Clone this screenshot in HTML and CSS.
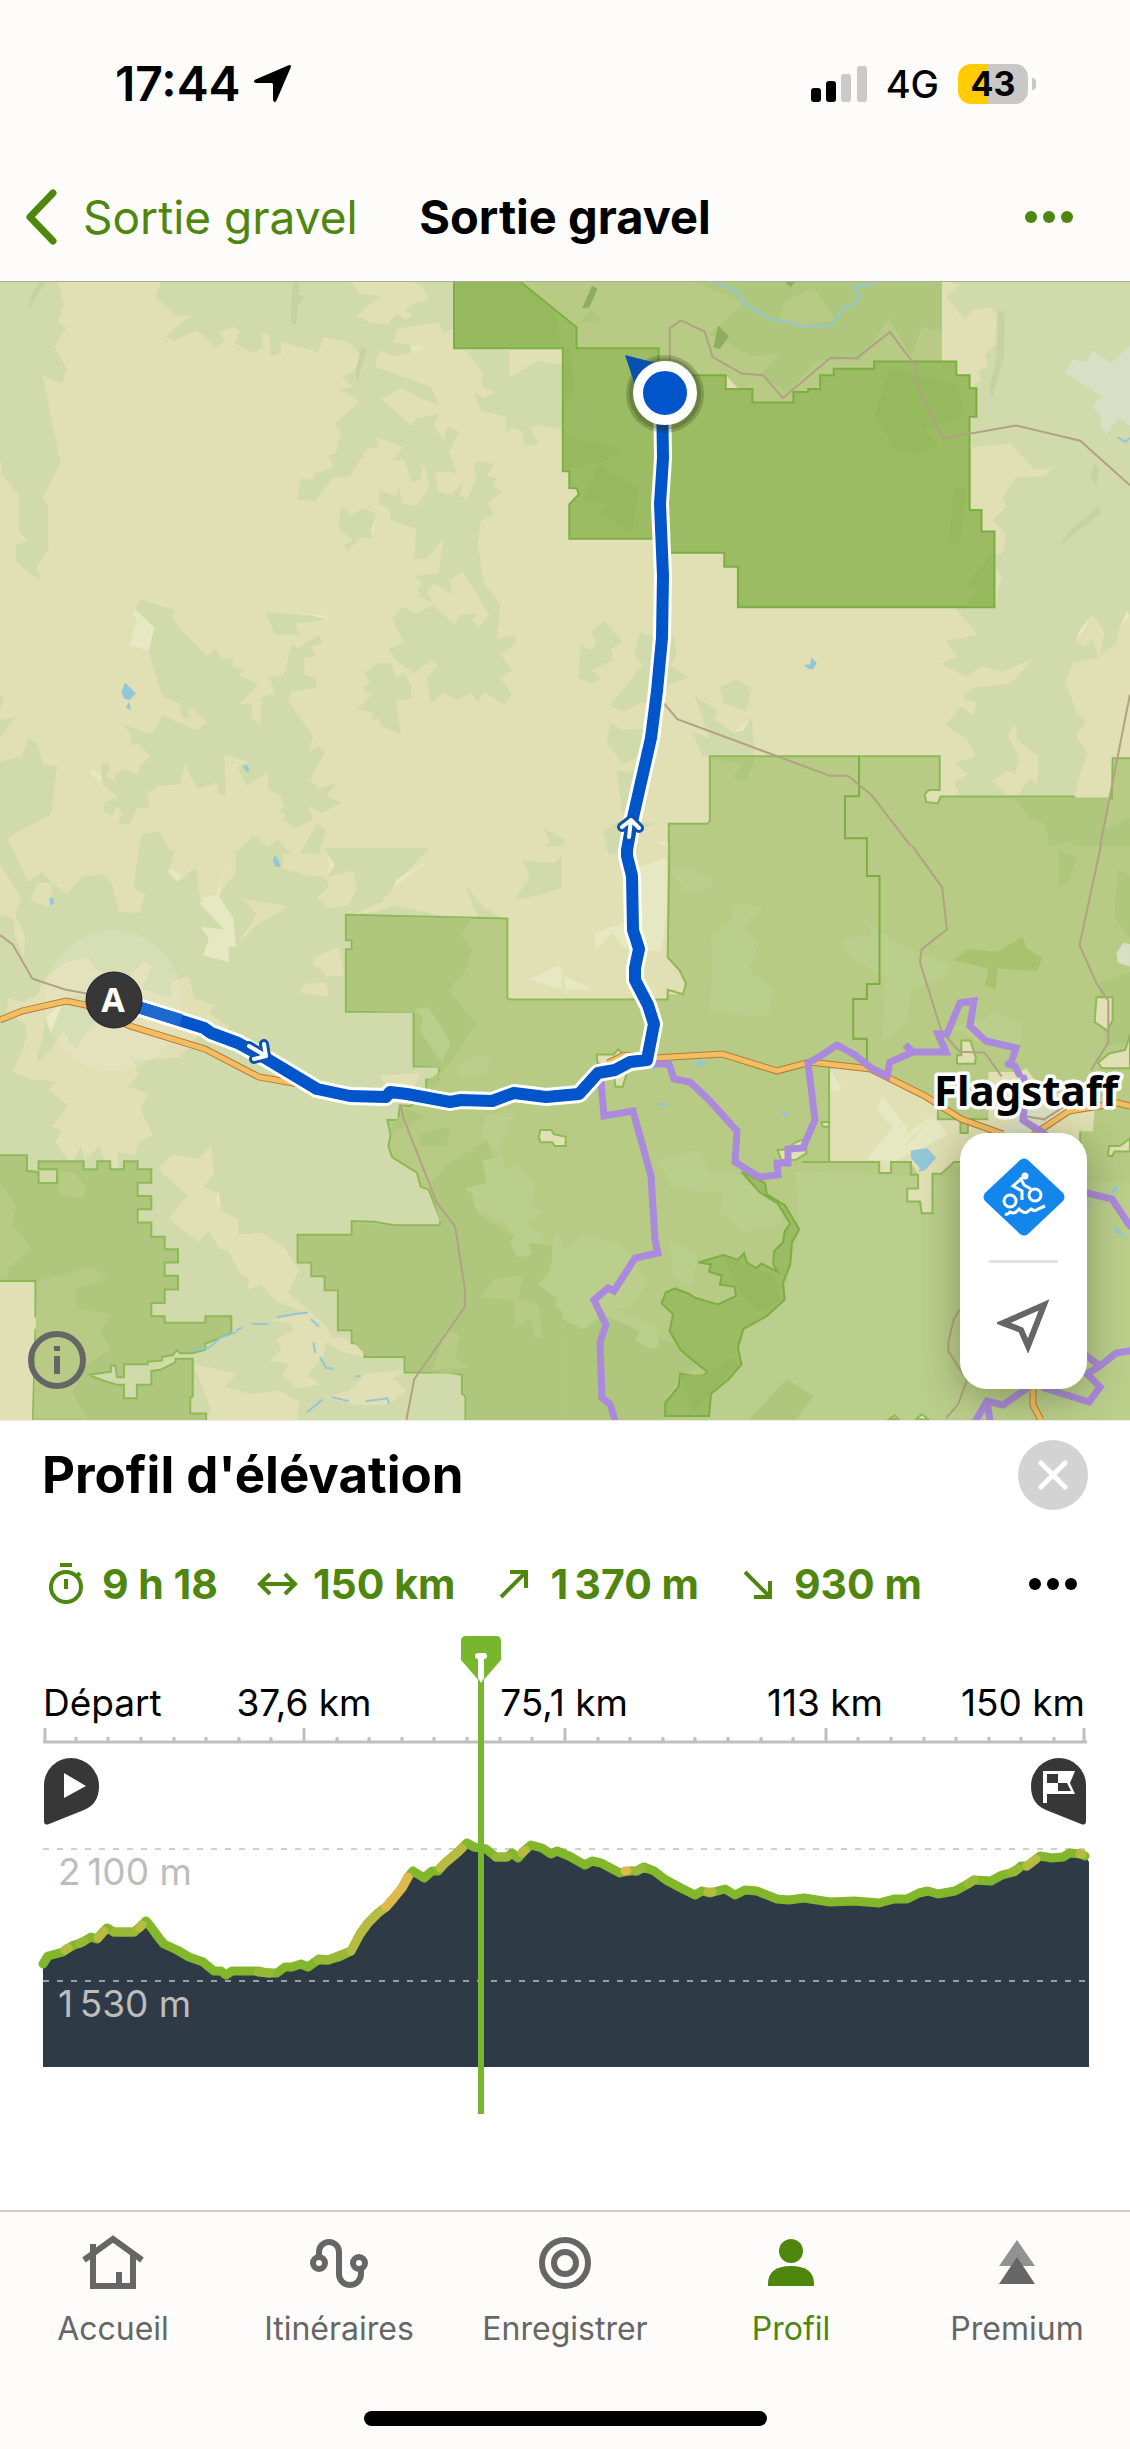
FILE: index.html
```html
<!DOCTYPE html>
<html lang="fr">
<head>
  <meta charset="UTF-8" />
  <meta name="viewport" content="width=device-width, initial-scale=1.0" />
  <title>Sortie gravel</title>
  <link rel="stylesheet" href="styles.css">
</head>
<body>
  <div class="app">
    <div class="status-bar">
      <div class="status-left">
        <span class="time">17:44</span>
        <svg width="40" height="40" viewBox="0 0 40 40"><path d="M36 1.500Q40 0 38.500 4L24.500 36.500Q22.500 40 21 36V20.500Q21 19 19.500 19H4Q0 17.500 3.500 15.500Z"/></svg>
      </div>
      <div class="status-right">
        <svg width="56" height="36" viewBox="0 0 56 36">
          <rect x="0" y="22" width="10" height="14" rx="3"/>
          <rect x="15" y="15" width="10" height="21" rx="3"/>
          <rect class="off" x="30" y="8" width="10" height="28" rx="3"/>
          <rect class="off" x="46" y="0" width="10" height="36" rx="3"/>
        </svg>
        <span class="network">4G</span>
        <span class="battery">43</span>
      </div>
    </div>

    <header class="nav-bar">
      <a href="#" class="back">
        <svg width="32" height="56" viewBox="0 0 32 56"><path d="M28 4L5 28L28 52"/></svg>
        Sortie gravel
      </a>
      <h1>Sortie gravel</h1>
      <button class="more" aria-label="Plus">
        <svg width="48" height="14" viewBox="0 0 48 14"><circle cx="6" cy="7" r="6"/><circle cx="24" cy="7" r="6"/><circle cx="42" cy="7" r="6"/></svg>
      </button>
    </header>

    <main>
      <div class="map">
        <svg class="map-canvas" viewBox="0 282 1130 1138">
          <rect class="sand" y="282" width="1130" height="1138"/>

          <!-- nord-ouest -->
          <g transform="translate(0 280) scale(.3603 .3635)">
            <path class="wood" d="M0 0H160L177 68L160 118L184 132L151 183L185 245L171 285L118 262L168 502L118 601L134 620V740L100 793L116 832L43 774L45 730L77 717L52 690V591L3 533L6 503L0 500Z"/>
            <path class="wood" d="M447 0H970L1000 38L1055 43L990 99L1030 118L1077 122L1100 94L1127 108L1145 96L1123 82L1148 64L1192 54L1170 16L1127 0H1260V132L1230 146L1217 115L1103 135L1090 172L1137 178L1140 200L1088 210L1055 192L1040 238L1198 295L1220 348L1113 298L1058 327L1142 401L1155 380L1217 370L1203 402L1232 440L1241 404L1272 417L1247 475L1267 530L1207 526L1215 580L1252 592L1288 552L1275 593L1296 603L1323 548L1314 505L1335 498L1370 508L1348 540L1376 544L1370 570L1397 582L1354 611L1370 645L1334 664L1326 730L1344 837L1389 891L1379 988L1432 975V1000L1389 1030L1421 1072L1389 1096L1421 1141L1399 1166L1344 1134L1324 1166L1309 1135L1268 1156L1230 1134L1196 1165L1184 1096L1217 1061L1197 1048L1148 1081L1097 1044L1079 1014L1120 997L1088 931L1117 899L1153 917L1203 895L1261 948L1275 921L1323 919L1310 937L1328 958L1357 921L1284 802L1249 826L1252 862L1205 835L1186 858L1200 887L1169 873L1158 850L1172 835L1148 815L1217 806L1231 712L1183 767H1150L1155 685L1084 660V633L1052 614V578L1101 594L1104 562L1118 616L1157 622L1192 571L1176 503L1166 551L1143 555L1121 494L1086 498L1119 460L1045 431L1054 465L1021 460L971 540L923 545L876 608L824 606L835 546L870 550L870 533L928 516L911 483L933 475L947 418L930 395L998 335L945 301L980 294L948 267L985 252L1000 205L966 170L898 158L882 199L779 169L781 200L751 211L747 149L725 148L730 186L700 199L651 175L666 143L650 127L607 142L625 167L600 186L546 138L483 167L457 156L530 98L492 99L432 48Z"/>
            <path class="wood" d="M1290 193H1414V270L1492 222L1568 235V415L1492 396L1470 408L1497 451L1457 457L1451 418L1424 406L1404 421V376L1335 360L1316 309L1343 326L1376 309L1338 293L1340 253ZM948 618L972 647L1012 627L1043 644L1034 711L1002 707L966 746L954 729L978 719L939 680ZM390 878L488 909L476 927L505 965L574 1034L597 1014L618 1045L648 1038L646 1067L677 1073L661 1087L717 1112L663 1168L700 1165L697 1203L723 1226L727 1148L762 1138L749 1094L788 1087L809 1004L831 1013L884 975L893 1000L863 1009L876 1035L844 1039V1083L877 1098V1121L807 1134L800 1159L869 1256L855 1299L884 1283L903 1297L861 1375L884 1398L937 1383L906 1418L946 1439L894 1466L858 1449L869 1484L820 1508L782 1482L796 1470L772 1461L787 1451L779 1418L745 1402V1352L684 1391L659 1340L695 1327L623 1305L627 1420L605 1415L607 1382L546 1400L514 1330L499 1388L434 1392L419 1409L407 1400L414 1449L381 1454L360 1496H326L340 1469L324 1445L313 1475L290 1463V1436L328 1424L282 1385V1324L308 1338L294 1366L326 1386L317 1361L348 1346L386 1363V1337L419 1311L383 1274L362 1282L366 1252L336 1220L419 1250L453 1197L542 1238L575 1217L534 1177L522 1190L535 1202L506 1207L499 1166L450 1144L414 1025L427 955L377 908ZM737 914L870 922L905 935L818 946L831 975H763Z"/>
            <path class="wood" d="M1048 1055L1085 1056L1099 1095L1123 1081L1142 1120V1152L1099 1156L1112 1248L1056 1227L1050 1202L1037 1218L1032 1187L990 1182L1032 1142L1008 1131L1027 1104L1009 1084ZM0 1145H10L0 1190ZM0 1211L45 1200L0 1258ZM78 1262L104 1274L118 1333L158 1337L142 1470L21 1534L40 1575H0V1325L61 1310ZM393 1526L444 1516L475 1580H383ZM655 1575L705 1528L745 1560L770 1540L810 1580ZM882 1495L906 1511L885 1580H830ZM1510 1508L1568 1540V1580H1490L1525 1545Z"/>
            <path class="pale" d="M367 915L377 908L428 955L412 1022L360 1003L379 938ZM773 910L908 925V934L860 922ZM248 1357L258 1348L282 1362V1384ZM1140 181L1182 184L1145 198ZM1043 648L1030 690L1034 706ZM414 879L450 890L477 902Z"/>
            <path class="hill" d="M813 3H832L828 38L844 48L827 65L822 124L806 115ZM1003 185L1018 195L1000 250L993 283L987 250ZM110 3L124 10L80 80L88 40Z"/>
            <path class="water" d="M347 1107L377 1137L359 1156L344 1151L337 1132ZM358 1160L364 1185L350 1176ZM672 1338L684 1333L692 1348L688 1356Z"/>
          </g>

          <!-- nord-est -->
          <g transform="translate(565 280) scale(.3603 .3635)">
            <path class="wood" d="M1046 0H1568V920L1540 950L1530 1000L1484 1033L1498 970L1465 920L1418 990L1440 1010L1465 988L1480 1040L1410 1052L1389 1105L1420 1190L1447 1218L1418 1254L1450 1300L1430 1360L1414 1420L1095 1418L1080 1380L1120 1360L1080 1328L1140 1310L1115 1262L1055 1224L1100 1175L1135 1198L1140 1160L1105 1152L1127 1123L1237 1110L1300 1041L1215 1078L1155 1062L1112 1092L1045 1054L1090 1036L1057 994L1147 976L1080 900H1192L1212 815L1195 790V757L1215 750L1224 700L1187 660L1225 625L1215 598L1250 543L1333 540L1350 517L1303 522L1237 449L1130 460L1125 300Z"/>
            <path class="sand" d="M1046 0L1097 14L1057 45L1111 111L1128 83L1183 74L1198 100L1194 180L1165 203L1175 240L1148 248L1155 275L1122 300L1085 222H1046ZM1242 1225L1253 1232L1255 1265L1315 1310L1310 1385L1290 1372L1255 1418H1225L1189 1376L1228 1350L1250 1358L1260 1310L1230 1258ZM1125 465L1158 580L1125 600Z"/>
            <path class="wood" d="M110 938L160 997L128 1014L134 1046L72 1073L98 1095L77 1111L37 1096L44 1006L76 1018L88 995L70 968ZM208 970L250 985L300 980L310 1028L292 1060L345 1094L290 1110L250 1180L215 1160L165 1186L124 1172L217 1058L192 1035ZM126 1218L160 1238L215 1235L222 1290L190 1320L160 1330L115 1272ZM144 1352L200 1350L190 1440L160 1470ZM430 1120L477 1099L518 1123L503 1186L440 1166ZM360 1143L423 1183L416 1208L467 1245L518 1200L527 1330L500 1376L467 1370L490 1330L380 1310L354 1242L400 1260ZM106 1520L145 1490L248 1494L200 1515L195 1568H120Z"/>
            <path class="town" d="M1388 255L1408 220L1448 224L1464 193L1515 230L1568 180V400L1535 380L1505 424L1486 405L1490 378L1465 346L1490 320Z"/>
            <path class="park" d="M-130 0H1046V222L760 260L630 340H520L446 262H260V188H32V130Z"/>
            <path class="park-dark" d="M340 0H1046V140L990 130L960 220H700L620 310L540 262L600 200L520 210L400 150L500 60ZM70 80L100 110L45 120Z"/>
            <path class="park" d="M610 60L690 20L750 110L640 130L590 105ZM900 105L965 220H820Z"/>
            <path class="hill-dark" d="M75 15L90 25L68 75L48 78ZM425 125L455 155L430 190L412 185ZM610 3H640L625 20Z"/>
            <path class="reserve" d="M-308 0H-130L32 130V188H260V262H446V300H520V337H634V308H675V300H708V262H746V244H858V224H1086V262H1123V298H1142V376H1123V633H1156V692H1192V900H480V789H442V750H292V712H12V617L38 590L33 573L12 572V526H-6V188H-308Z"/>
            <path class="reserve-shade" d="M-300 6H-130L-30 85L-10 180H-300ZM-4 190H15L25 300L-4 340ZM95 505L206 575L186 692L93 642L120 618L50 606ZM0 430L155 465L110 500L0 520ZM900 245L1090 290L1110 370L1000 410L1035 455L980 478L915 465L860 370ZM1080 572L1115 575L1095 725L1065 722ZM1188 750V896H1110L1150 850L1115 835Z"/>
            <path class="park edge" d="M402 1310H1040V1403H1010L998 1415L1003 1436L1035 1440L1042 1421H1410L1420 1428H1518L1520 1316H1590V1600H288V1496H395L402 1488Z"/>
            <path class="park-dark" d="M1245 1424H1515L1500 1510L1568 1480V1578H1440L1400 1545L1345 1560L1333 1500L1290 1480Z"/>
            <path class="park-dark" d="M404 1313H525V1330L500 1376L467 1370L490 1330L404 1318Z"/>
            <path class="border" d="M816 1310V1420H777V1536H838V1580"/>
            <path class="hill" d="M1203 85H1220L1218 210L1185 330L1178 300L1198 210ZM1480 625L1490 640L1410 700L1370 738L1400 690ZM1470 505L1482 520L1475 565L1458 545Z"/>
            <path class="pale" d="M518 1200L495 1240L468 1245ZM1560 910L1542 950L1568 925ZM1460 925L1430 960L1418 990L1440 965ZM258 1545H285L287 1568H270Z"/>
            <path class="water" d="M684 1039L698 1052L690 1070H675L663 1059L680 1058Z"/>
            <path class="stream" d="M408 3L480 34L505 70L575 111H612L655 129L738 124L778 72L800 67L819 45L803 20L820 14L850 15L862 3M1532 432L1556 445L1568 434"/>
            <path class="road" d="M291 220V132L322 111L388 142L410 212L490 257L550 262L605 325L737 214L810 215L902 143L975 240L968 270L1048 436L1252 400L1430 442L1568 565M272 1162L312 1208L735 1364H785L850 1416L968 1568M1568 1140L1483 1568"/>
          </g>

          <!-- sud-ouest -->
          <g transform="translate(0 850) scale(.3603 .37)">
            <path class="wood" d="M0 40L60 130L42 175L68 230L62 270L0 180V0H38L77 85L117 60L140 85L185 118L230 72L285 65L310 88L330 168L388 170L402 120L370 100L385 0H485L470 60L495 85L545 46L552 115L600 130L655 60V0H790L783 50L850 68L905 75L930 40L900 -5H1190L1095 95L1060 140L990 170L1568 170V1568H0Z"/>
            <path class="sand" d="M560 50H625L610 130L555 135ZM785 10H900L928 38L908 70L850 62L785 50ZM900 75L980 55L990 105L970 148L910 158L880 130L915 95ZM675 132L803 153L712 203L662 250L712 175ZM105 87L147 90L137 155L84 137ZM0 38L60 130L42 175L70 230L66 288L40 230L38 185L0 175Z"/>
            <path class="sand" d="M245 290L260 320L350 350L400 300L420 315L395 375L475 400L478 355L525 343L540 400L598 420L580 440L635 480L610 500L570 480L500 560L370 570L385 605L355 640L410 658L390 700L425 770L385 790L375 825L325 815L330 865L305 870L275 800L235 840L225 800L198 850L155 790L170 760L145 745L190 690L135 650L155 625L90 620L33 600L60 545L75 500L70 470L20 440L22 400L60 410L100 395L130 340L180 305Z"/>
            <path class="wood" d="M125 460L175 400L300 380L330 440L250 480L210 540L175 490L140 540L100 575L120 500Z"/>
            <path class="sand" d="M480 822L550 835L587 797L594 875L565 910L610 930L612 970L662 1000L662 1040L727 1035L790 1075L830 1135L800 1195L905 1285L920 1320L940 1315L1010 1340L1008 1370L945 1355L905 1330L895 1370L855 1420L890 1445L820 1455L785 1420L800 1390L750 1380L780 1350L765 1320L820 1300L805 1280L750 1270L850 1250L765 1220L725 1175L685 1190L692 1160L665 1143L635 1085L610 1078L578 1030L550 1060L468 995L520 935L438 860ZM537 1390L658 1415L625 1450L700 1470L775 1460L830 1490L825 1560H570L585 1510ZM1125 1405L1090 1430L1128 1460L1075 1500H985L905 1478L970 1460L1015 1415ZM870 290L940 262L955 340H905L912 398L830 385L850 360L905 358L900 330L870 310ZM1050 610L1167 603L1150 640L1080 640Z"/>
            <path class="pale" d="M625 50L608 125L648 185L655 262H635V303L563 285L580 240L557 208L622 215L555 145L565 130L600 120ZM475 10L470 50L505 70L490 85L468 60ZM910 15L928 40L908 72L915 40ZM127 455L180 400L140 495ZM605 915L612 970L600 945ZM1195 25L1095 100L1100 80ZM1460 68L1470 75L1425 138Z"/>
            <path class="sand" d="M1195 22L1290 28L1120 90L1063 148L990 170H1065L1120 190L1408 185V404H1580V-10H1210Z"/>
            <path class="wood" d="M1450 28L1540 35L1568 0V100L1500 120L1425 138L1470 75ZM1290 95L1340 150L1390 185H1330ZM1030 170L1095 150L1230 180H1110L1090 205Z"/>
            <path class="pale" d="M1468 350L1555 310L1568 345V378Z"/>
            <circle class="halo" cx="314" cy="407" r="190"/>

            <path class="park edge" d="M960 175L1408 185V400L1415 404H1590V1600H1292V1475L1282 1470V1418L1245 1412H1123V1370H1012V1333H976V1298H938V1190H901V1152H864V1115H826V1040H976V1003L1040 1005L1095 1014H1220L1223 1000L1190 918L1168 910L1157 872L1088 830L1078 800L1084 770L1075 730H1105L1110 690L1140 692L1183 645V620H1215L1220 590L1212 585H1148V440L1140 437H960V268H976V244H960Z"/>
            <path class="park-dark" d="M964 180L1310 184L1280 230L1310 270L1290 330L1245 380L1280 420L1320 470L1250 570L1200 640H1187V622L1220 600V588L1152 581V440L964 433V272H980V241H964ZM1192 905L1225 870L1240 851L1355 783L1374 855L1323 981L1429 1045L1466 1062L1540 1071L1526 1125L1545 1224L1574 1265V1575H1295V1475L1285 1466V1416L1126 1408V1367L1016 1366L980 1330V1295L942 1293V1187H905V1149L868 1148V1112H830V1044H980V1007L1095 1018H1226Z"/>
            <path class="park-dark" d="M1090 740L1130 700L1180 720L1085 765ZM1160 770L1250 745L1240 800L1170 800Z"/>
            <path class="park-light" d="M1150 430L1190 425L1250 520L1228 575L1165 490L1175 455ZM1350 715L1430 710L1400 770L1380 800L1410 870L1430 845L1485 905L1480 960L1515 980L1460 1005L1500 1035L1515 1065L1466 1062L1478 1095L1435 1100L1415 1060L1429 1045L1400 1010L1320 970L1310 930L1290 915L1350 900L1340 840L1390 825L1335 770ZM1535 1050L1545 1030L1568 1060V1255L1540 1230L1550 1215L1494 1175L1530 1135ZM1265 590L1330 550L1360 560L1350 600L1280 620Z"/>
            <path class="park" d="M1370 1160L1450 1150L1440 1210L1495 1230L1505 1320H1485L1475 1265L1430 1290L1425 1215L1335 1210ZM1240 1295L1275 1310L1265 1370L1300 1400L1200 1405Z"/>

            <path class="park-dark edge" d="M-20 825H75V867L107 870V900H158V863H107V841H232V863H270V841H306V863H344V841H382V863H420V899H382V935H420V971H382V1007H420V1045H457V1079H494V1115H457V1151H494V1188H457V1224H420V1260H457V1278H570V1260H642V1305L570 1335V1350L535 1360H500L490 1352L480 1365L450 1370V1380L410 1383V1390H344V1425H325L320 1393H308V1410L250 1418L262 1425L290 1435L325 1445H344V1482H380V1445H420V1408L445 1405L487 1385V1375H535V1478L528 1480V1523H572V1600H88L98 1295L110 1290V1262H98V1165H-20Z"/>
            <path class="sand" d="M-10 1168H95V1262L107 1268V1288L95 1295L88 1560H-10Z"/>
            <path class="park" d="M0 905L20 925L45 965L35 1010L90 1080L25 1125L20 1160H0ZM102 1165L250 1128L300 1155L205 1190L220 1240L310 1255L280 1300L310 1350L240 1390L200 1465L240 1535H94ZM165 870L205 870L240 915L230 942L162 930Z"/>
            <path class="stream" d="M535 1352L580 1345L610 1320L655 1303M672 1290L655 1300M698 1280L745 1282M770 1263L815 1255L855 1250M863 1268L885 1288M870 1330L875 1360M888 1370L905 1400L925 1402M985 1422H1000M852 1520L895 1485M920 1478L968 1490M1015 1490L1075 1482L1080 1497"/>
            <path class="water" d="M762 15L773 25L778 45L765 45L757 30ZM136 130L148 130L150 145L140 150Z"/>
            <path class="road" d="M0 230L35 255L90 348L180 377L240 388M1112 690L1120 725L1212 953L1263 1017L1291 1190L1290 1235L1150 1430L1128 1540"/>
          </g>

          <!-- sud-est -->
          <g transform="translate(565 850) scale(.3603 .37)">
            <path class="park" d="M-6 -10H1580V1560H-6Z"/>
            <path class="park-light" d="M640 870L950 880L1568 900V1540H400L410 1460L480 1400L490 1290L610 1200L650 1030ZM-6 1080L50 1042L140 1060L190 1100L230 1170L180 1235L100 1250L51 1296L-6 1270ZM405 230L465 190L460 140L550 155L490 210L540 250L510 320L575 380L565 450L400 440L410 320ZM255 840L370 810L400 870L500 880L600 950V1010L500 1035L430 980L440 930L300 915ZM290 55L340 50L420 80L380 120L330 110ZM770 240L860 230L830 190L960 270L1070 310L1050 350L960 380L950 460L880 520L890 350L790 290ZM1080 480L1200 440L1270 470L1260 540L1150 520Z"/>
            <path class="park-dark" d="M-6 1268L51 1296L115 1251L208 1305L300 1330L370 1400L320 1420L280 1490V1540H-6ZM1480 360L1568 330V520L1500 530ZM1370 0L1420 20L1400 80L1370 105ZM1535 50L1568 70V240L1525 180ZM615 1430L690 1475L640 1540H510Z"/>
            <path class="park-light" d="M120 1230L255 1290L260 1340L240 1350L195 1325L210 1295L110 1260ZM290 1055L370 1090L350 1180L300 1150Z"/>
            <path class="park-shade" d="M1080 298L1120 268L1200 275L1270 235L1280 265L1325 292L1310 328L1200 320L1195 378L1165 365L1175 320Z"/>
            <path class="sand" d="M-10 -14H285V290L310 320L335 355L330 390H285V404H-10Z"/>
            <path class="wood" d="M108 -14H205L195 10L125 12Z"/>
            <path class="pale" d="M190 50L283 20V160L268 275L165 265L130 225L83 270V225L165 195ZM0 342L78 378H0Z"/>
            <path class="border thin" d="M290 -10L285 290L318 325L336 360L328 390L285 378V404L-8 404"/>
            <path class="border" d="M838 -10V70H873V362H838V403H800V510H838V580"/>
            <path class="reserve edge" d="M490 870L540 925L590 955L625 1010L610 1030L605 1060L580 1085L578 1120L590 1140L545 1118L530 1130L505 1115L497 1090L480 1108L440 1095L370 1115L405 1120L400 1140L435 1150L430 1175L470 1180L475 1205L425 1228L360 1210L345 1200L305 1185L280 1195L268 1225L300 1255L290 1300L320 1350L355 1380L395 1410L380 1425L320 1415L315 1450L278 1495V1530H400L405 1470L455 1430L490 1390L480 1345L495 1295L560 1260L610 1215L605 1170L625 1120L630 1060L650 1025L610 960L560 930L555 900Z"/>
            <path class="reserve-shade" d="M440 1100L500 1120L580 1150L600 1215L540 1250L480 1190ZM320 1420L400 1415L470 1370L480 1395L400 1470L360 1520L340 1470Z"/>
            <path class="sand" d="M735 590H800L895 610L940 630L1000 665L1035 700V728H1095V765H1120V728H1175V600H1260L1280 590L1310 630L1470 700L1465 760L1430 760V800L1100 850L1080 840L1050 875H1020V982H990V950H950V915H980V878L960 843H905V872H872V843H735Z"/>
            <path class="pale" d="M865 700L880 665L950 750L945 800L1025 720L1060 770L920 840L835 838L910 750ZM735 590L770 650H735ZM950 765L1025 715L940 800Z"/>
            <path class="border thin" d="M658 843H872V873H905V843H960V878H980V915H950V950H985L990 982H1020V875H1045L1080 843H1100M733 590V843M1035 700V728H1098V765H1118V728H1175M1430 760V800"/>
            <path class="sand edge" d="M88 553H135L148 538L160 552L185 560L160 640H140L135 600L90 575ZM590 810H615L640 790L668 780L670 820L640 838H600ZM1100 515L1125 515L1140 560L1138 578H1088V555H1100ZM1475 398H1520V460L1505 488L1470 465ZM1568 498L1555 540L1510 550L1480 575L1490 590H1568ZM1510 800H1540L1568 780V815H1525L1518 828L1507 825ZM712 735L733 735V748H715ZM900 1538L915 1528L925 1538ZM975 1538L990 1525L1010 1540ZM-68 757H-38L-31 768L2 775V800H-28L-36 790L-68 790L-73 775Z"/>
            <path class="town" d="M1210 750L1280 705L1330 698L1410 700L1330 765L1215 765ZM1530 280L1550 250L1568 255V315L1535 305Z"/>
            <path class="water" d="M960 812L1005 806L1030 832L1000 865L980 870L985 860L960 832ZM358 582L372 567L393 573L388 583ZM255 685L282 683L280 692L258 691ZM600 708L612 706L618 725L605 720ZM240 583H255L250 598L242 592ZM1515 920L1530 907L1535 915L1518 932ZM1522 1015L1545 1035L1568 1052L1530 1035ZM1448 950L1472 965L1455 962Z"/>
            <path class="road" d="M965 -10L1047 102L1060 215L990 268L985 303L1045 490L1095 545L1165 548L1212 612M1487 -10L1428 257L1475 360L1508 407V520L1460 595M1096 1243L1080 1265L1064 1330V1355L1116 1433L1090 1500L1058 1535M1280 720L1330 728L1390 690"/>
          </g>

          <defs>
            <path id="i40" d="M0 1020L22 1011L66 1001L86 1005L130 1026L205 1049L259 1077L299 1084M608 1063L624 1055L655 1058L722 1054L777 1071L810 1062L871 1069L925 1096L961 1119L1003 1134M1033 1135L1069 1111L1118 1103L1130 1106M1033 1388V1405L1041 1420"/>
            <path id="trace" d="M114 1000L141 1008L204 1028L211 1033L238 1043L267 1059L317 1089L350 1096L386 1097L390 1092L407 1094L450 1102L461 1100L492 1101L514 1093L546 1097L579 1094L598 1073L615 1070L630 1062L647 1060L654 1024L648 1005L635 980V968L639 949L633 930L632 876L627 856V850L632 822L651 738L657 691L662 638L663 576L660 504L663 458L662 393"/>
            <path id="fleches" d="M249 1046L266 1056M264 1044L266 1056L254 1059M629 837L631 820M622 827L631 820L639 828"/>
          </defs>

          <use class="highway" href="#i40"/>
          <use class="highway-fill" href="#i40"/>

          <g class="cycleway">
            <path d="M601 1081L604 1116L633 1111L651 1176L655 1240L658 1253L635 1258L614 1291L608 1288L594 1300L606 1325L600 1342L602 1398L610 1404L615 1420"/>
            <path d="M655 1064H669L674 1079L690 1082L709 1100L737 1131L735 1162L759 1177L778 1175L777 1163H788V1149L803 1148L815 1120L808 1063L819 1057L837 1045L855 1055L871 1068L887 1076L890 1062L913 1052L905 1045L913 1052H946L938 1034H947L960 1003L974 1001L970 1026L986 1041L1016 1048L1012 1060M1008 1064L1015 1066L1019 1074M1024 1078V1080M1024 1110L1023 1120L1032 1126L1044 1133"/>
            <path d="M1087 1193L1112 1199L1130 1226M1087 1356L1100 1366L1116 1353L1130 1351M1100 1366L1087 1374L1100 1387L1089 1402L1044 1388M1026 1389L1003 1405L987 1401L976 1420M987 1401L990 1420"/>
          </g>

          <use class="route-case" href="#trace"/>
          <use class="route-line" href="#trace"/>
          <path class="route-near" d="M141 1008L181 1020"/>
          <use class="arrow-case" href="#fleches"/>
          <use class="arrow" href="#fleches"/>

          <circle class="start-pin" cx="114" cy="1000" r="28"/>
          <text class="start-letter" x="113" y="1012" text-anchor="middle">A</text>

          <circle class="here-shadow" cx="665" cy="394" r="39"/>
          <circle class="here-shadow" cx="665" cy="394" r="36"/>
          <path class="heading" d="M625 355L656 363L635 385Z"/>
          <circle class="here-ring" cx="665" cy="393" r="27"/>

          <text class="city" x="1026" y="1106" text-anchor="middle">Flagstaff</text>
        </svg>

        <button class="info" aria-label="Informations">
          <svg width="58" height="58" viewBox="0 0 58 58"><circle cx="29" cy="29" r="26"/><path d="M26 15H32V20H26ZM26 25H32V43H26Z"/></svg>
        </button>

        <div class="map-controls">
          <button aria-label="Type de carte">
            <svg width="82" height="78" viewBox="0 0 82 78">
              <path class="diamond" d="M37 2Q41 -1 45 2L80 35Q83 39 80 43L45 76Q41 79 37 76L2 43Q-1 39 2 35Z"/>
              <circle class="bike" cx="27" cy="43" r="6"/>
              <circle class="bike" cx="52" cy="37" r="6"/>
              <circle class="head" cx="42" cy="18" r="3.500"/>
              <path class="bike" d="M48 31L41 27L38 21L30 28L39 33V42M36 21H40M22 56Q25 57 27 54Q30 56 33 54L36 51Q41 56 44 54L48 51Q52 54 55 51L62 48"/>
            </svg>
          </button>
          <hr>
          <button aria-label="Ma position">
            <svg width="54" height="54" viewBox="0 0 54 54"><path class="locate" d="M47 6L6 24L24 31L31 47Z"/></svg>
          </button>
        </div>
      </div>

      <section class="panel">
        <div class="panel-header">
          <h2>Profil d'élévation</h2>
          <button class="close" aria-label="Fermer">
            <svg width="30" height="30" viewBox="0 0 30 30"><path d="M3 3L27 27M27 3L3 27"/></svg>
          </button>
        </div>

        <div class="stats">
          <div class="stat">
            <svg width="43" height="44" viewBox="0 0 43 44"><circle cx="21" cy="25" r="15"/><path d="M15 3H27M21 17V27M31 15L35 11"/></svg>
            9 h 18
          </div>
          <div class="stat">
            <svg width="43" height="44" viewBox="0 0 43 44"><path d="M4 22H39M14 12L4 22L14 32M29 12L39 22L29 32"/></svg>
            150 km
          </div>
          <div class="stat">
            <svg width="43" height="44" viewBox="0 0 43 44"><path d="M8 35L33 10M17 10H33V26"/></svg>
            1&#8239;370 m
          </div>
          <div class="stat">
            <svg width="43" height="44" viewBox="0 0 43 44"><path d="M8 10L33 35M17 35H33V19"/></svg>
            930 m
          </div>
          <button class="more" aria-label="Plus de statistiques">
            <svg width="48" height="14" viewBox="0 0 48 14"><circle cx="6" cy="7" r="6"/><circle cx="24" cy="7" r="6"/><circle cx="42" cy="7" r="6"/></svg>
          </button>
        </div>

        <svg class="chart" viewBox="42 1630 1046 490">
          <g class="axis-labels">
            <text x="43" y="1716">Départ</text>
            <text x="304" y="1716" text-anchor="middle">37,6 km</text>
            <text x="564" y="1716" text-anchor="middle">75,1 km</text>
            <text x="825" y="1716" text-anchor="middle">113 km</text>
            <text x="1085" y="1716" text-anchor="end">150 km</text>
          </g>
          <path class="axis" d="M43 1742H1087M45 1728V1742M304 1728V1742M565 1728V1742M826 1728V1742M1084 1728V1742"/>
          <path class="axis" d="M76 1737V1742M108 1737V1742M141 1737V1742M174 1737V1742M206 1737V1742M239 1737V1742M271 1737V1742M337 1737V1742M369 1737V1742M402 1737V1742M434 1737V1742M467 1737V1742M500 1737V1742M532 1737V1742M598 1737V1742M630 1737V1742M663 1737V1742M695 1737V1742M728 1737V1742M761 1737V1742M793 1737V1742M858 1737V1742M891 1737V1742M924 1737V1742M956 1737V1742M989 1737V1742M1021 1737V1742M1054 1737V1742"/>

          <!-- départ / arrivée -->
          <path class="pin" d="M44 1785A27 27 0 0 1 71 1758A28 28 0 0 1 99 1786Q99 1804 84 1810L49 1824Q44 1826 44 1821Z"/>
          <path class="pin-icon" d="M64 1773L86 1786L64 1798Z"/>
          <path class="pin" d="M1086 1785A27 27 0 0 0 1059 1758A28 28 0 0 0 1031 1786Q1031 1804 1046 1810L1081 1824Q1086 1826 1086 1821Z"/>
          <path class="pin-icon" d="M1043 1771H1075L1070 1783L1075 1794H1047V1803H1043Z"/>
          <path class="pin" d="M1047 1774H1058V1783H1047ZM1058 1783H1067L1071 1791H1058Z"/>

          <path class="guide" d="M43 1849H1086"/>
          <path class="relief" d="M43 2067V1964L48 1956L63 1952L67 1949L74 1945L81 1943L91 1937L97 1939L102 1933L107 1928L114 1932H134L141 1926L146 1921L151 1927L159 1938L164 1944L177 1950L189 1957L203 1962L214 1971H221L226 1975L232 1971H258L267 1973H277L285 1967H292L301 1964L308 1967L319 1959L328 1960L339 1957L351 1951L360 1934L368 1923L378 1913L386 1907L393 1899L402 1888L408 1877L413 1871L424 1878L432 1871H438L445 1863L458 1852L467 1843L474 1847L486 1849L496 1857H507L512 1853L518 1858L524 1851L531 1845L542 1848L551 1854L557 1851L569 1856L585 1865L592 1861L601 1863L620 1873L628 1871H637L644 1867L654 1871L666 1880L681 1888L695 1895L702 1891L710 1893L725 1889L735 1895L745 1890L757 1891L777 1899L789 1900L804 1898L830 1902L854 1901L879 1903L894 1899H907L919 1893L928 1891L938 1894L955 1891L966 1885L974 1880L991 1881L1002 1875L1014 1872L1021 1866H1027L1040 1856L1052 1858L1063 1857L1070 1853L1085 1855L1089 1862V2067Z"/>
          <path class="guide on-relief" d="M43 1981H1086"/>
          <path class="slope" d="M43 1964L48 1956L63 1952L67 1949L74 1945L81 1943L91 1937L97 1939L102 1933L107 1928L114 1932H134L141 1926L146 1921L151 1927L159 1938L164 1944L177 1950L189 1957L203 1962L214 1971H221L226 1975L232 1971H258L267 1973H277L285 1967H292L301 1964L308 1967L319 1959L328 1960L339 1957L351 1951L360 1934L368 1923L378 1913L386 1907L393 1899L402 1888L408 1877L413 1871L424 1878L432 1871H438L445 1863L458 1852L467 1843L474 1847L486 1849L496 1857H507L512 1853L518 1858L524 1851L531 1845L542 1848L551 1854L557 1851L569 1856L585 1865L592 1861L601 1863L620 1873L628 1871H637L644 1867L654 1871L666 1880L681 1888L695 1895L702 1891L710 1893L725 1889L735 1895L745 1890L757 1891L777 1899L789 1900L804 1898L830 1902L854 1901L879 1903L894 1899H907L919 1893L928 1891L938 1894L955 1891L966 1885L974 1880L991 1881L1002 1875L1014 1872L1021 1866H1027L1040 1856L1052 1858L1063 1857L1070 1853L1081 1854L1085 1856"/>
          <path class="slope mild" d="M80 1943L84 1941M114 1932H134M258 1972L270 1973M318 1960L328 1960L351 1951M496 1857H507M636 1871L642 1868M968 1884L974 1880M1012 1872L1018 1869"/>
          <path class="slope medium" d="M65 1950L68 1948M98 1938L104 1931M139 1928L142 1925M351 1951L360 1934L368 1923L378 1913L386 1907M440 1868L445 1863L458 1852L462 1848M522 1853L525 1850M708 1892L712 1892M1027 1866L1036 1859M1080 1854H1082"/>
          <path class="slope steep" d="M386 1907L393 1899L402 1888L408 1877M625 1871H627"/>
          <text class="altitude" x="58" y="1885">2&#8239;100 m</text>
          <text class="altitude" x="58" y="2017">1&#8239;530 m</text>

          <path class="cursor" d="M478 1678H484V2114H478ZM466 1636H496Q501 1636 501 1641V1660L481 1683L461 1660V1641Q461 1636 466 1636Z"/>
          <path class="cursor-mark" d="M478 1653H484Q487 1653 487 1656T484 1659V1678L481 1683L478 1678V1659Q475 1659 475 1656T478 1653Z"/>
        </svg>
      </section>
    </main>

    <nav class="tab-bar">
      <div class="tabs">
        <a href="#" class="tab">
          <svg width="64" height="58" viewBox="0 0 64 58"><path d="M3 26L32 5L61 26M12 22V10M12 20V52H52V20M38 52V38"/></svg>
          Accueil
        </a>
        <a href="#" class="tab">
          <svg width="64" height="58" viewBox="0 0 64 58"><circle cx="12" cy="29" r="6"/><circle cx="52" cy="29" r="6"/><path d="M12 23V18A10 10 0 0 1 32 18V40A10 10 0 0 0 54 40V35"/></svg>
          Itinéraires
        </a>
        <a href="#" class="tab">
          <svg width="64" height="58" viewBox="0 0 64 58"><circle cx="32" cy="29" r="23"/><circle cx="32" cy="29" r="11"/></svg>
          Enregistrer
        </a>
        <a href="#" class="tab active">
          <svg width="64" height="58" viewBox="0 0 64 58"><circle class="solid" cx="32" cy="17" r="12"/><path class="solid" d="M9 52V50Q9 32 32 32T55 50V52Z"/></svg>
          Profil
        </a>
        <a href="#" class="tab">
          <svg width="64" height="58" viewBox="0 0 64 58"><path class="solid faded" d="M32 6L50 32H14Z"/><path class="solid" d="M32 23L50 50H14Z"/></svg>
          Premium
        </a>
      </div>
      <div class="home-indicator"></div>
    </nav>
  </div>
</body>
</html>
```

FILE: styles.css
```css
* {
  box-sizing: border-box;
}

body {
  margin: 0;
  font-family: Inter, 'Liberation Sans', sans-serif;
  background: #fdfcfa;
  color: #000;
}

h1,
h2 {
  margin: 0;
  font-weight: 700;
}

button {
  margin: 0;
  padding: 0;
  border: none;
  background: none;
  cursor: pointer;
}

a {
  text-decoration: none;
}

svg {
  display: block;
  flex: none;
}

.app {
  min-height: 100vh;
  display: flex;
  flex-direction: column;
}

/* Barre d'état */
.status-bar {
  display: flex;
  justify-content: space-between;
  align-items: center;
  padding: 54px 102px 38px 115px;
  line-height: 60px;
}

.status-left {
  display: flex;
  align-items: center;
  gap: 11px;
}

.time {
  font-size: 48px;
  font-weight: 600;
}

.status-right {
  display: flex;
  align-items: center;
  gap: 19px;
}

.status-right .off {
  fill: #cbcac8;
}

.network {
  font-size: 38px;
  font-weight: 500;
}

.battery {
  position: relative;
  width: 70px;
  height: 40px;
  line-height: 40px;
  border-radius: 13px;
  background: linear-gradient(to right, #ffcc02 43%, #c9c8c6 43%);
  font-size: 34px;
  font-weight: 700;
  text-align: center;
}

.battery::after {
  content: "";
  position: absolute;
  right: -8px;
  top: 14px;
  width: 4px;
  height: 12px;
  border-radius: 0 4px 4px 0;
  background: #c9c8c6;
}

/* Navigation */
.nav-bar {
  display: grid;
  grid-template-columns: 1fr auto 1fr;
  align-items: center;
  padding: 35px 57px 34px 25px;
  border-bottom: 1px solid #a9ad98;
  line-height: 60px;
}

.back {
  display: flex;
  align-items: center;
  gap: 26px;
  margin-right: -32px;
  font-size: 46px;
  color: #4f860d;
}

.back svg {
  fill: none;
  stroke: #4f860d;
  stroke-width: 7;
  stroke-linecap: round;
  stroke-linejoin: round;
}

.nav-bar h1 {
  margin-left: 32px;
  font-size: 47px;
}

.nav-bar .more {
  justify-self: end;
  fill: #4f860d;
}

/* Carte */
.map {
  position: relative;
  overflow: hidden;
}

.map-canvas {
  width: 100%;
  height: auto;
}

.sand { fill: #e1dfb4; }
.wood { fill: #d1daab; }
.pale { fill: #e6e8c1; }
.town { fill: #d9dfc4; }
.park { fill: #b7cb84; }
.park-light { fill: #bbcf8c; }
.park-dark { fill: #aec77c; }
.park-shade { fill: #a8c270; }
.reserve { fill: #9cbc63; }
.reserve-shade { fill: #96b95d; }
.hill { fill: #c8d2a0; }
.hill-dark { fill: #8fac63; }
.water { fill: #94c6da; }

.halo {
  fill: #fff;
  opacity: 0.12;
}

.edge {
  stroke: #8fb957;
  stroke-width: 2;
  vector-effect: non-scaling-stroke;
}

.reserve {
  stroke: #7dae42;
  stroke-width: 2;
  vector-effect: non-scaling-stroke;
}

.border {
  fill: none;
  stroke: #7dae42;
  stroke-width: 2;
  vector-effect: non-scaling-stroke;
}

.border.thin {
  stroke: #8fb957;
}

.road,
.stream {
  fill: none;
  stroke: #b2a184;
  stroke-width: 2;
  vector-effect: non-scaling-stroke;
}

.stream {
  stroke: #94c6da;
}

.highway,
.highway-fill {
  fill: none;
  stroke: #b57a3c;
  stroke-width: 7;
}

.highway-fill {
  stroke: #f3be62;
  stroke-width: 5;
}

.cycleway path {
  fill: none;
  stroke: #ab89dc;
  stroke-width: 7;
  stroke-linecap: round;
}

.route-case,
.route-line,
.route-near {
  fill: none;
  stroke: #0055cb;
  stroke-width: 12;
  stroke-linejoin: round;
}

.route-case {
  stroke: #fff;
  stroke-width: 18;
}

.route-near {
  stroke: #1e69d0;
}

.arrow-case,
.arrow {
  fill: none;
  stroke: #0b52b4;
  stroke-width: 10;
  stroke-linecap: round;
  stroke-linejoin: round;
}

.arrow {
  stroke: #fff;
  stroke-width: 4;
}

.start-pin {
  fill: #373737;
  stroke: #261c2b;
  stroke-width: 1;
}

.start-letter {
  fill: #fff;
  font-family: 'Noto Sans', sans-serif;
  font-size: 34px;
  font-weight: 700;
}

.heading {
  fill: #0b4fb0;
}

.here-shadow {
  fill: #26330d;
  opacity: 0.24;
}

.here-ring {
  fill: #0055cb;
  stroke: #fff;
  stroke-width: 10;
}

.city {
  font-family: 'Noto Sans', sans-serif;
  font-size: 42px;
  font-weight: 700;
  stroke: #fff;
  stroke-width: 7;
  stroke-linejoin: round;
  paint-order: stroke;
}

.info {
  position: absolute;
  left: 28px;
  bottom: 31px;
  fill: #666;
}

.info circle {
  fill: none;
  stroke: #666;
  stroke-width: 6;
}

.map-controls {
  position: absolute;
  right: 43px;
  bottom: 31px;
  width: 127px;
  padding: 25px 0 36px;
  border-radius: 27px;
  background: #fff;
  box-shadow: 0 8px 40px rgba(50, 60, 20, 0.4);
  display: flex;
  flex-direction: column;
  align-items: center;
}

.map-controls hr {
  width: 69px;
  margin: 24px 0 36px;
  border: none;
  border-top: 3px solid #e3e3e3;
}

.diamond {
  fill: #1286ea;
}

.bike {
  fill: none;
  stroke: #fff;
  stroke-width: 3;
}

.head {
  fill: #fff;
}

.locate {
  fill: none;
  stroke: #666;
  stroke-width: 6;
}

/* Profil d'élévation */
.panel {
  padding: 19px 42px 90px;
  border-top: 1px solid #ececec;
  background: #fff;
}

.panel-header {
  display: flex;
  justify-content: space-between;
  align-items: center;
}

.panel-header h2 {
  font-size: 51px;
  line-height: 60px;
}

.close {
  width: 70px;
  height: 70px;
  border-radius: 50%;
  background: #d3d3d3;
  display: flex;
  justify-content: center;
  align-items: center;
}

.close svg {
  stroke: #fff;
  stroke-width: 5;
  stroke-linecap: round;
}

.stats {
  display: flex;
  align-items: center;
  gap: 38px;
  margin: 50px 0 22px;
  padding-left: 3px;
}

.stat {
  display: flex;
  align-items: center;
  gap: 14px;
  font-size: 41px;
  font-weight: 700;
  line-height: 48px;
  color: #4f860d;
  white-space: nowrap;
}

.stat svg {
  fill: none;
  stroke: #4f860d;
  stroke-width: 4;
}

.stats .more {
  width: 70px;
  margin-left: auto;
  display: flex;
  justify-content: center;
}

.chart {
  width: 100%;
  height: auto;
  overflow: visible;
}

.axis-labels,
.altitude {
  font-size: 37px;
}

.altitude {
  fill: #bdbdbd;
}

.axis {
  stroke: #bfbfbf;
  stroke-width: 3;
}

.pin {
  fill: #373737;
}

.pin-icon {
  fill: #fff;
}

.guide {
  stroke: #cfcfcf;
  stroke-width: 2;
  stroke-dasharray: 6 8;
}

.guide.on-relief {
  stroke: #97a0a6;
}

.relief {
  fill: #2e3a46;
}

.slope {
  fill: none;
  stroke: #83b72b;
  stroke-width: 9;
  stroke-linecap: round;
  stroke-linejoin: round;
}

.slope.mild { stroke: #98b935; }
.slope.medium { stroke: #b6bb42; }
.slope.steep { stroke: #dfb94b; }

.cursor {
  fill: #78b62d;
}

.cursor-mark {
  fill: #fff;
}

/* Onglets */
.tab-bar {
  border-top: 2px solid #cbcbc9;
  padding: 22px 0;
  background: #fdfcfa;
}

.tabs {
  display: flex;
  margin-bottom: 62px;
}

.tab {
  flex: 1;
  display: flex;
  flex-direction: column;
  align-items: center;
  gap: 17px;
  font-size: 32px;
  line-height: 40px;
  color: #666;
}

.tab svg {
  fill: none;
  stroke: #666;
  stroke-width: 6;
}

.tab .solid {
  fill: #666;
  stroke: none;
}

.tab .faded {
  fill: #929292;
}

.tab.active {
  color: #4f860d;
}

.tab.active .solid {
  fill: #4f860d;
}

.home-indicator {
  width: 403px;
  max-width: 60%;
  height: 15px;
  margin: 0 auto;
  border-radius: 8px;
  background: #000;
}
```
